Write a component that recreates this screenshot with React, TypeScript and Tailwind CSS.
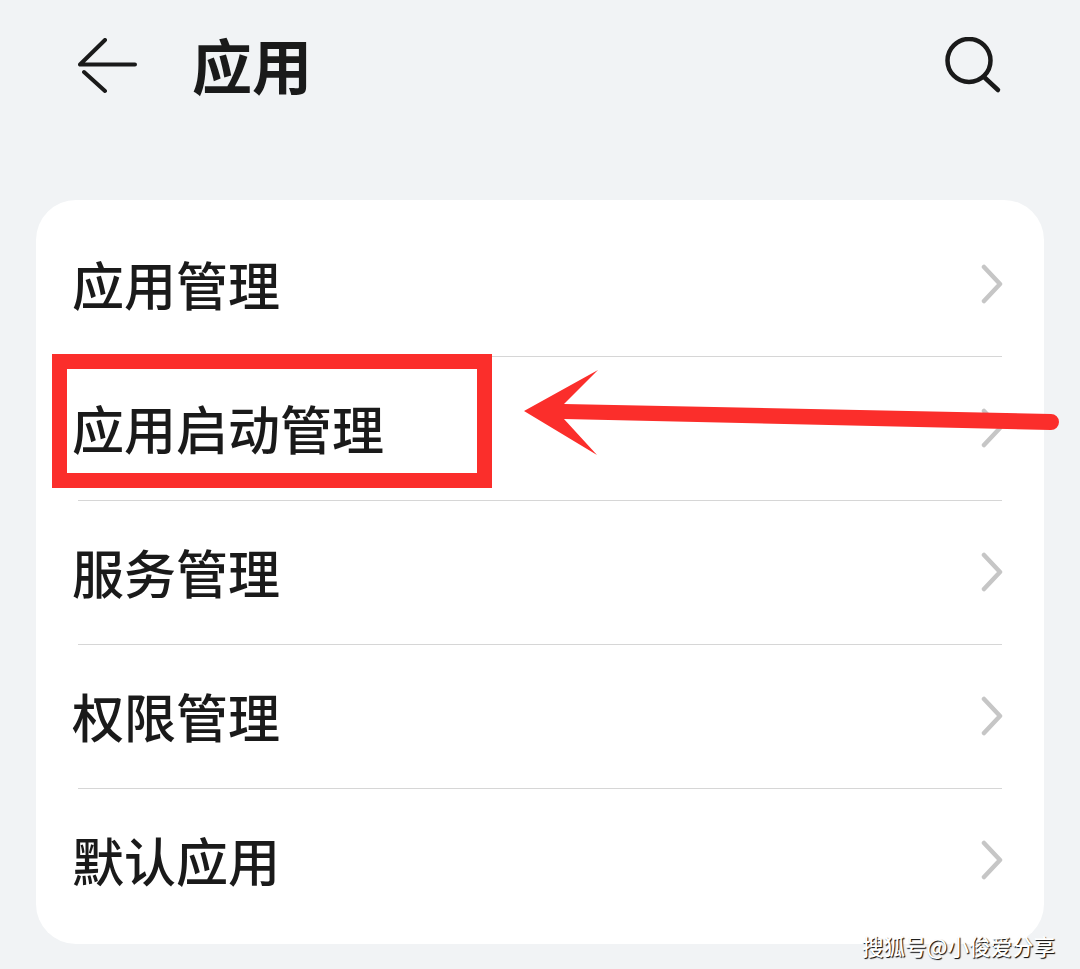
const rows = ['应用管理', '应用启动管理', '服务管理', '权限管理', '默认应用'];

function Chevron() {
  return (
    <svg width="24" height="40" viewBox="0 0 24 40" fill="none" className="shrink-0">
      <path d="M4 3 L20 20 L4 37" stroke="#c6c6c6" strokeWidth="4.5" strokeLinecap="round" strokeLinejoin="round" />
    </svg>
  );
}

export default function App() {
  return (
    <div className="relative w-[1080px] h-[969px] overflow-hidden bg-[#f1f3f5] text-[#1a1a1a] font-['Noto_Sans_CJK_SC','Noto_Sans',sans-serif]">
      <header className="flex items-center h-[132px] mb-[68px] pl-[78px] pr-[78px]">
        <svg width="60" height="56" viewBox="0 0 60 56" fill="none" className="shrink-0">
          <path d="M27 2 L2 26.5 H57 M6 34 L27 53" stroke="#1a1a1a" strokeWidth="4" strokeLinecap="round" strokeLinejoin="round" />
        </svg>
        <h1 className="ml-[54px] -mt-[4px] text-[60px] leading-none font-bold">应用</h1>
        <svg width="60" height="60" viewBox="0 0 60 60" fill="none" className="ml-auto mt-[2px] shrink-0">
          <circle cx="27" cy="23.5" r="21.5" stroke="#1a1a1a" strokeWidth="4.5" />
          <path d="M42 40 L56 53" stroke="#1a1a1a" strokeWidth="4.5" strokeLinecap="round" />
        </svg>
      </header>

      <section className="mx-[36px] h-[744px] rounded-[40px] bg-white pt-[12px] pl-[36px] pr-[40px]">
        {rows.map((label, i) => (
          <div key={label}>
            <div className="flex items-center justify-between h-[144px]">
              <span className="text-[52px] leading-none font-medium">{label}</span>
              <Chevron />
            </div>
            {i < rows.length - 1 && <div className="ml-[6px] mr-[2px] -mb-px h-px bg-[#d6d6d6]" />}
          </div>
        ))}
      </section>

      {/* red markup drawn over the screenshot */}
      <div className="absolute left-[52px] top-[354px] w-[440px] h-[134px] border-[15px] border-[#fb2e2b]" />
      <svg className="absolute left-0 top-0" width="1080" height="969" viewBox="0 0 1080 969" fill="none">
        <path d="M524 411 L598 370 L564 404 L1051 414 A8 8 0 0 1 1051 430 L564 419 L597 455 Z" fill="#fb2e2b" />
      </svg>

      <div className="absolute left-[862px] top-[931px] text-[21.5px] leading-[30px] font-medium whitespace-nowrap text-white [text-shadow:1px_1px_1px_#000]">
        搜狐号@小俊爱分享
      </div>
    </div>
  );
}
